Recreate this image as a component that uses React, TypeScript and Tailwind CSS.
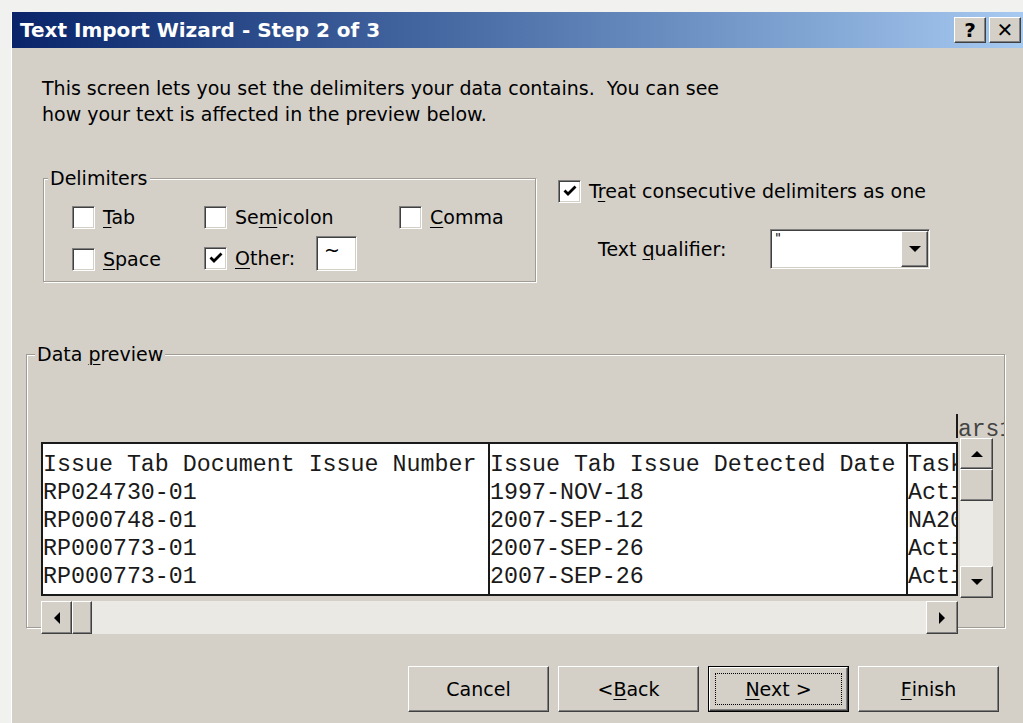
import type { ReactNode } from "react";

const ui = "font-['DejaVu_Sans','Liberation_Sans',sans-serif]";
const mono = "font-['Liberation_Mono','Courier_New',monospace]";

// classic 3D bevels
const raised =
  "bg-[#d4d0c8] border border-t-white border-l-white border-r-[#404040] border-b-[#404040] shadow-[inset_-1px_-1px_0_#808080]";
const sunken =
  "bg-white border border-t-[#808080] border-l-[#808080] border-r-white border-b-white shadow-[inset_1px_1px_0_#404040,inset_-1px_-1px_0_#d4d0c8]";
const etched = "border border-[#a09c94] shadow-[inset_1px_1px_0_#fff,1px_1px_0_#fff]";

const preview = [
  ["Issue Tab Document Issue Number", "RP024730-01", "RP000748-01", "RP000773-01", "RP000773-01"],
  ["Issue Tab Issue Detected Date", "1997-NOV-18", "2007-SEP-12", "2007-SEP-26", "2007-SEP-26"],
  ["Task", "Action", "NA2007", "Action", "Action"],
];

function U({ children }: { children: ReactNode }) {
  return <span className="underline underline-offset-[3px] decoration-1">{children}</span>;
}

function Check({ on }: { on?: boolean }) {
  return (
    <span className={`w-[23px] h-[23px] shrink-0 flex items-center justify-center ${sunken}`}>
      {on && (
        <svg width="14" height="12" viewBox="0 0 14 12">
          <path d="M1.5 5.5 L5 9 L12.5 1.5" fill="none" stroke="#000" strokeWidth="2.8" />
        </svg>
      )}
    </span>
  );
}

function Option({ label, on }: { label: ReactNode; on?: boolean }) {
  return (
    <label className="flex items-center gap-[8px]">
      <Check on={on} />
      <span className="leading-[24px]">{label}</span>
    </label>
  );
}

function Arrow({ dir }: { dir: "up" | "down" | "left" | "right" }) {
  const vertical = dir === "up" || dir === "down";
  const pts = {
    up: "0,6 6,0 12,6",
    down: "0,0 12,0 6,6",
    left: "6,0 6,12 0,6",
    right: "0,0 0,12 6,6",
  }[dir];
  return (
    <svg width={vertical ? 12 : 6} height={vertical ? 6 : 12} viewBox={vertical ? "0 0 12 6" : "0 0 6 12"}>
      <polygon points={pts} fill="#000" />
    </svg>
  );
}

function PushButton({ children, primary }: { children: ReactNode; primary?: boolean }) {
  if (primary) {
    return (
      <div className="w-[141px] h-[46px] border border-black flex">
        <div className={`flex-1 flex ${raised}`}>
          <span className="flex-1 m-[5px] border border-dotted border-black flex items-center justify-center">
            {children}
          </span>
        </div>
      </div>
    );
  }
  return <div className={`w-[141px] h-[46px] flex items-center justify-center ${raised}`}>{children}</div>;
}

export default function App() {
  return (
    <div className={`w-[1023px] h-[723px] overflow-hidden bg-[#f1f1ef] pt-[12px] pl-[11px] flex ${ui} text-[19px] text-black`}>
      <div className="flex-1 flex flex-col bg-[#d4d0c8] border-l border-white">
        {/* title bar */}
        <div className="h-[36px] shrink-0 flex items-center pl-[8px] pr-[2px] bg-linear-to-r from-[#0a246a] to-[#a6caf0]">
          <span className="text-white font-bold text-[20px]">Text Import Wizard - Step 2 of 3</span>
          <div className="ml-auto flex gap-[3px]">
            <div className={`w-[32px] h-[26px] flex items-center justify-center font-bold text-[20px] ${raised}`}>?</div>
            <div className={`w-[32px] h-[26px] flex items-center justify-center font-bold text-[20px] ${raised}`}>✕</div>
          </div>
        </div>

        <div className="flex-1 flex flex-col pl-[14px]">
          <p className="pt-[27px] pl-[16px] leading-[26px]">
            This screen lets you set the delimiters your data contains.&nbsp; You can see
            <br />
            how your text is affected in the preview below.
          </p>

          {/* delimiter options */}
          <div className="mt-[41px] flex items-start pl-[17px] gap-[22px]">
            <fieldset className={`w-[493px] ${etched}`}>
              <legend className="ml-[4px] px-[2px] leading-[20px] bg-[#d4d0c8]">Delimiters</legend>
              <div className="grid grid-cols-[132px_195px_auto] items-end gap-y-[7px] pl-[28px] pt-[17px] pb-[10px]">
                <Option label={<><U>T</U>ab</>} />
                <Option label={<>Se<U>m</U>icolon</>} />
                <Option label={<><U>C</U>omma</>} />
                <Option label={<><U>S</U>pace</>} />
                <div className="flex items-end gap-[21px]">
                  <div className="pb-[1px]">
                    <Option on label={<><U>O</U>ther:</>} />
                  </div>
                  <div className={`w-[41px] h-[35px] pl-[7px] pt-[3px] leading-[20px] ${sunken}`}>~</div>
                </div>
              </div>
            </fieldset>

            <div className="flex flex-col pt-[11px]">
              <Option on label={<>T<U>r</U>eat consecutive delimiters as one</>} />
              <div className="mt-[26px] flex items-center pl-[40px]">
                <span className="w-[172px]">Text <U>q</U>ualifier:</span>
                <div className={`w-[160px] h-[40px] flex p-[1px] ${sunken}`}>
                  <span className="flex-1 pl-[3px] text-[13px] leading-[14px]">"</span>
                  <div className={`w-[27px] flex items-center justify-center ${raised}`}>
                    <Arrow dir="down" />
                  </div>
                </div>
              </div>
            </div>
          </div>

          {/* data preview */}
          <fieldset className={`mt-[62px] w-[978px] ${etched}`}>
            <legend className="ml-[8px] px-[2px] leading-[20px] bg-[#d4d0c8]">
              Data <U>p</U>review
            </legend>
            <div className="pl-[14px] pt-[50px]">
              <div className="h-[24px] flex">
                <div className="w-[915px]" />
                <div className="w-[2px] bg-[#1a1a1a]" />
                <div className={`w-[46px] overflow-hidden ${mono} text-[23px] leading-[24px] text-[#444]`}>
                  <span className="block mt-[4px]">ars1</span>
                </div>
              </div>
              <div className="flex h-[160px]">
                <div className={`mt-[4px] w-[917px] h-[154px] overflow-hidden border-2 border-[#1a1a1a] bg-white flex ${mono} text-[23.3px] leading-[28px] text-[#1a1a1a]`}>
                  {preview.map((col, i) => (
                    <div
                      key={i}
                      className={
                        i === 0
                          ? "w-[447px] border-r-2 border-[#1a1a1a] pt-[7px] whitespace-nowrap overflow-hidden"
                          : i === 1
                          ? "w-[418px] border-r-2 border-[#1a1a1a] pt-[7px] whitespace-nowrap overflow-hidden"
                          : "flex-1 pt-[7px] whitespace-nowrap overflow-hidden"
                      }
                    >
                      {col.map((cell, r) => (
                        <div key={r}>{cell}</div>
                      ))}
                    </div>
                  ))}
                </div>
                <div className="ml-[2px] w-[33px] flex flex-col">
                  <div className={`h-[31px] flex items-center justify-center ${raised}`}>
                    <Arrow dir="up" />
                  </div>
                  <div className={`h-[32px] ${raised}`} />
                  <div className="flex-1 bg-[#ebe9e4]" />
                  <div className={`h-[32px] flex items-center justify-center ${raised}`}>
                    <Arrow dir="down" />
                  </div>
                </div>
              </div>
              <div className="mt-[3px] -mb-[7px] w-[917px] h-[33px] flex relative">
                <div className={`w-[31px] flex items-center justify-center ${raised}`}>
                  <Arrow dir="left" />
                </div>
                <div className={`w-[20px] ${raised}`} />
                <div className="flex-1 bg-[#ebe9e4]" />
                <div className={`w-[32px] flex items-center justify-center ${raised}`}>
                  <Arrow dir="right" />
                </div>
              </div>
            </div>
          </fieldset>

          {/* wizard buttons */}
          <div className="mt-[38px] flex justify-end gap-[9px] pr-[24px]">
            <PushButton>Cancel</PushButton>
            <PushButton>&lt; <U>B</U>ack</PushButton>
            <PushButton primary>
              <U>N</U>ext &gt;
            </PushButton>
            <PushButton>
              <U>F</U>inish
            </PushButton>
          </div>
        </div>
      </div>
    </div>
  );
}
